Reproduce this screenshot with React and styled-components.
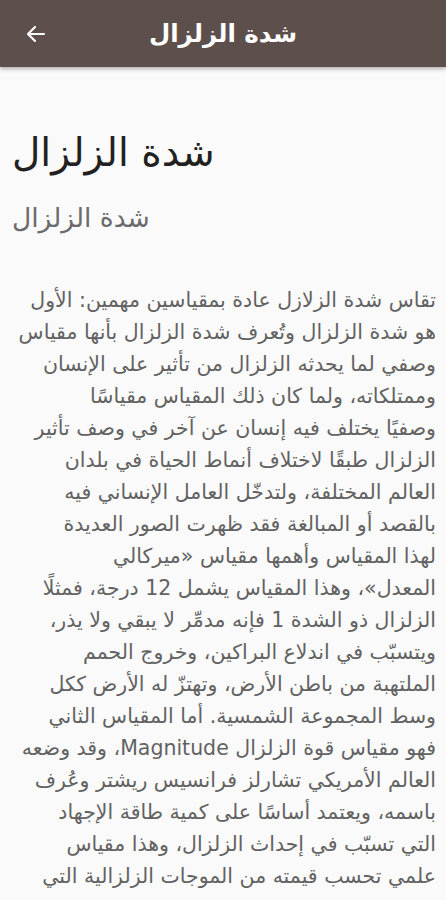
import React from "react";
import styled, { createGlobalStyle } from "styled-components";

const GlobalStyle = createGlobalStyle`
  html, body {
    margin: 0;
    padding: 0;
    background: #fafafa;
    font-family: "DejaVu Sans", "Noto Sans", sans-serif;
  }
`;

const Page = styled.div`
  width: 446px;
  height: 900px;
  background: #fafafa;
  overflow: hidden;
`;

const AppBar = styled.header`
  height: 67px;
  background: #5d4f4c;
  box-shadow: 0 2px 4px rgba(0, 0, 0, 0.3);
  display: flex;
  align-items: center;
  padding: 0 20px;
`;

const BackButton = styled.button`
  background: none;
  border: none;
  padding: 4px;
  display: flex;
  align-items: center;
  cursor: pointer;
`;

const BarTitle = styled.h1`
  flex: 1;
  margin: 0 32px 0 0;
  text-align: center;
  color: #fff;
  font-size: 24.5px;
  font-weight: bold;
  direction: rtl;
`;

const Content = styled.main`
  padding: 58px 10px 0 12px;
`;

const Title = styled.h2`
  margin: 0;
  font-size: 39px;
  font-weight: normal;
  color: #212121;
  text-align: left;
  line-height: 56px;
`;

const Subtitle = styled.h3`
  margin: 20px 0 0;
  font-size: 26.5px;
  font-weight: normal;
  color: #6b6b6b;
  text-align: left;
  line-height: 34px;
`;

const Body = styled.p`
  margin: 49px 0 0;
  direction: rtl;
  text-align: right;
  font-size: 20.5px;
  line-height: 32px;
  color: #626262;
`;

const Line = styled.span`
  display: block;
  white-space: nowrap;
`;

const ArrowIcon = () => (
  <svg width="24" height="24" viewBox="0 0 24 24" fill="none">
    <path
      d="M20 12H5M11 5l-7 7 7 7"
      stroke="#fff"
      strokeWidth="2.2"
      strokeLinecap="round"
      strokeLinejoin="round"
    />
  </svg>
);

const lines = [
  "تقاس شدة الزلازل عادة بمقياسين مهمين: الأول",
  "هو شدة الزلزال وتُعرف شدة الزلزال بأنها مقياس",
  "وصفي لما يحدثه الزلزال من تأثير على الإنسان",
  "وممتلكاته، ولما كان ذلك المقياس مقياسًا",
  "وصفيًا يختلف فيه إنسان عن آخر في وصف تأثير",
  "الزلزال طبقًا لاختلاف أنماط الحياة في بلدان",
  "العالم المختلفة، ولتدخّل العامل الإنساني فيه",
  "بالقصد أو المبالغة فقد ظهرت الصور العديدة",
  "لهذا المقياس وأهمها مقياس «ميركالي",
  "المعدل»، وهذا المقياس يشمل 12 درجة، فمثلًا",
  "الزلزال ذو الشدة 1 فإنه مدمِّر لا يبقي ولا يذر،",
  "ويتسبّب في اندلاع البراكين، وخروج الحمم",
  "الملتهبة من باطن الأرض، وتهتزّ له الأرض ككل",
  "وسط المجموعة الشمسية. أما المقياس الثاني",
  "فهو مقياس قوة الزلزال Magnitude، وقد وضعه",
  "العالم الأمريكي تشارلز فرانسيس ريشتر وعُرف",
  "باسمه، ويعتمد أساسًا على كمية طاقة الإجهاد",
  "التي تسبّب في إحداث الزلزال، وهذا مقياس",
  "علمي تحسب قيمته من الموجات الزلزالية التي",
];

const App = () => {
  return (
    <Page>
      <GlobalStyle />
      <AppBar>
        <BackButton aria-label="back">
          <ArrowIcon />
        </BackButton>
        <BarTitle>شدة الزلزال</BarTitle>
      </AppBar>
      <Content>
        <Title>شدة الزلزال</Title>
        <Subtitle>شدة الزلزال</Subtitle>
        <Body>
          {lines.map((l, i) => (
            <Line key={i}>{l}</Line>
          ))}
        </Body>
      </Content>
    </Page>
  );
};

export default App;
